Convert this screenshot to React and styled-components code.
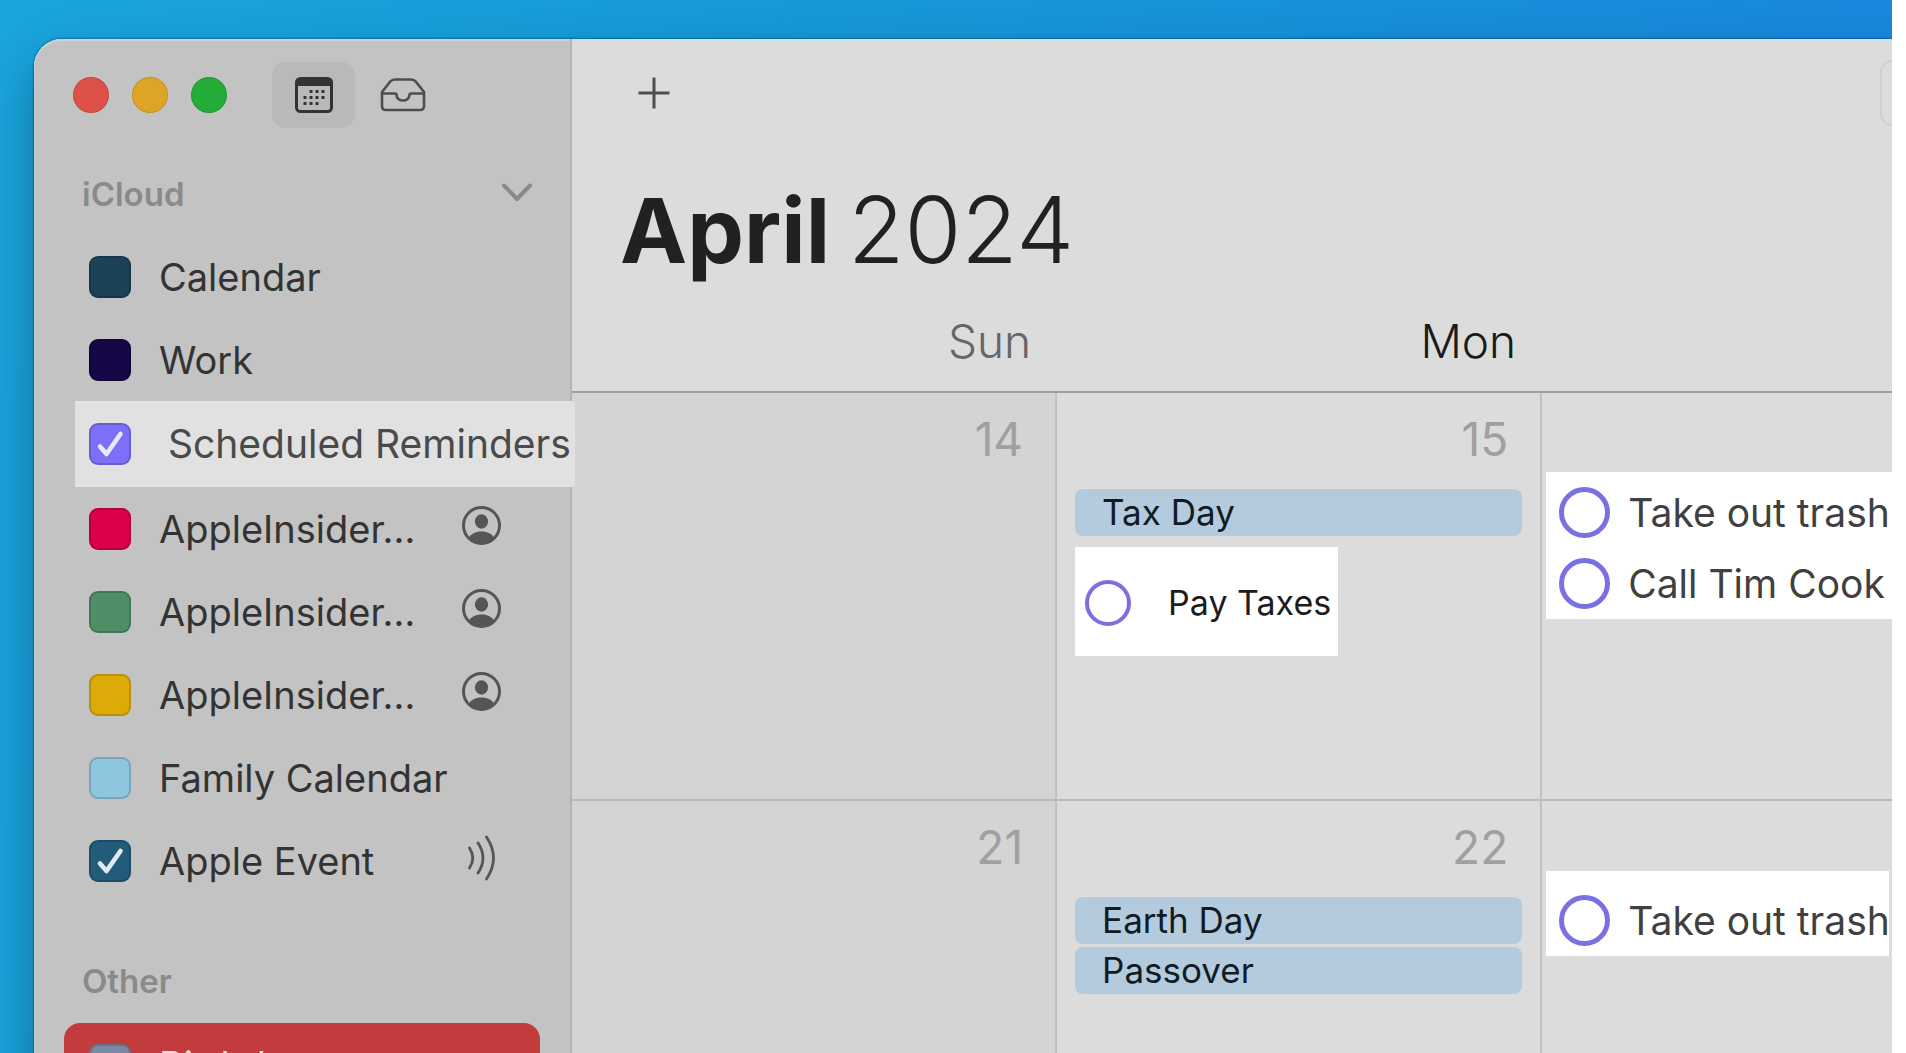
import { useState } from "react";
import styled, { createGlobalStyle } from "styled-components";

const GlobalStyle = createGlobalStyle`
  *,
  *::before,
  *::after {
    box-sizing: border-box;
  }

  body {
    margin: 0;
    background: #fff;
    font-family: Inter, "Liberation Sans", sans-serif;
    color: #383838;
  }

  button,
  input {
    margin: 0;
    padding: 0;
    border: none;
    background: none;
    font: inherit;
    color: inherit;
  }
`;

const Desktop = styled.div`
  height: 100vh;
  margin-right: 14px;
  padding: 39px 0 0 34px;
  overflow: hidden;
  background: linear-gradient(100deg, #1aa5dd 0%, #169ad8 35%, #1a84dc 100%);
`;

const Window = styled.div`
  display: flex;
  min-height: 100%;
  border-top-left-radius: 28px;
  background: #dcdcdc;
  box-shadow: 0 0 2px 1px rgba(0, 50, 90, 0.4), 0 24px 50px rgba(0, 40, 70, 0.4),
    inset 0 2px 1px #d3dee8;
`;

const Sidebar = styled.aside`
  flex: none;
  width: 538px;
  padding-top: 23px;
  border-right: 2px solid #b5b5b5;
  border-top-left-radius: 28px;
  background: #c3c3c3;
  box-shadow: inset 0 2px 1px #cbd3dc;
`;

const SidebarToolbar = styled.div`
  display: flex;
  align-items: center;
  height: 66px;
  padding-left: 39px;
`;

const WindowButtons = styled.div`
  display: flex;
  gap: 23px;
  margin-right: 45px;
`;

const WindowButton = styled.button`
  width: 36px;
  height: 36px;
  border: 1px solid rgba(0, 0, 0, 0.12);
  border-radius: 50%;
  background: ${(p) => p.$color};
`;

const IconButton = styled.button`
  display: flex;
  align-items: center;
  justify-content: center;
  width: ${(p) => p.$width}px;
  height: 66px;
  border-radius: 14px;
  background: ${(p) => (p.$active ? "#b9b9b9" : "transparent")};
  color: ${(p) => (p.$active ? "#333" : "#4d4d4d")};
`;

const SectionHeader = styled.div`
  display: flex;
  align-items: center;
  justify-content: space-between;
  height: 40px;
  margin: ${(p) => (p.$first ? "46px 37px 21px 48px" : "59px 37px 22px 48px")};
  color: #8a8a8a;
`;

const SectionTitle = styled.h2`
  margin: 0;
  font-size: 33px;
  line-height: 40px;
  font-weight: 600;
`;

const CalendarList = styled.ul`
  margin: 0;
  padding: 0;
  list-style: none;
`;

const CalendarItem = styled.li`
  display: flex;
  align-items: center;
  height: 83px;
  margin-left: 41px;
  padding-left: 14px;

  ${(p) =>
    p.$highlighted &&
    `
    position: relative;
    z-index: 1;
    height: 86px;
    margin-right: -5px;
    background: #e1e1e1;
  `}
`;

const CalendarLabel = styled.label`
  display: flex;
  align-items: center;
  gap: ${(p) => (p.$wide ? 37 : 28)}px;
  font-size: ${(p) => (p.$wide ? 39 : 38)}px;
  line-height: 48px;
  white-space: nowrap;
  color: ${(p) => p.$color || "#333"};
`;

const CheckboxWrapper = styled.span`
  position: relative;
  display: flex;
`;

const Checkbox = styled.input`
  appearance: none;
  width: 42px;
  height: 42px;
  border: 2px solid rgba(0, 0, 0, 0.16);
  border-radius: 9px;
  background: ${(p) => p.$color};
`;

const CheckMark = styled.svg`
  position: absolute;
  inset: 0;
  pointer-events: none;
`;

const ItemBadge = styled.span`
  display: flex;
  justify-content: center;
  width: 39px;
  margin: 0 69px 6px auto;
  color: #555;
`;

const SelectedCalendar = styled.div`
  height: 83px;
  display: flex;
  align-items: center;
  margin: 0 30px;
  padding-left: 25px;
  border-radius: 16px;
  background: #c23c3d;
`;

const Main = styled.main`
  flex: 1;
  min-width: 0;
  padding-top: 21px;
`;

const MainToolbar = styled.div`
  display: flex;
  align-items: center;
  justify-content: space-between;
  height: 66px;
  padding-left: 51px;
  color: #5c5c5c;
`;

const SearchButton = styled.button`
  width: 12px;
  height: 66px;
  border: 2px solid #d0d0d0;
  border-right: none;
  border-radius: 16px 0 0 16px;
`;

const Month = styled.h1`
  display: flex;
  align-items: baseline;
  gap: 18px;
  margin: 48px 0 0 48px;
  font-size: 90px;
  line-height: 112px;
  font-weight: 700;
  color: #212121;
`;

const Year = styled.span`
  font-size: 92px;
  font-weight: 300;
`;

const MonthTable = styled.table`
  width: 100%;
  table-layout: fixed;
  border-spacing: 0;
`;

const Column = styled.col`
  width: ${(p) => p.$share}%;
`;

const Weekday = styled.th`
  height: 106px;
  padding: 26px 26px 22px 0;
  border-bottom: 2px solid #a0a0a0;
  font-size: 46px;
  line-height: 56px;
  font-weight: 300;
  text-align: right;
  color: ${(p) => (p.$weekend ? "#666" : "#1a1a1a")};
`;

const Day = styled.td`
  height: 408px;
  padding: 0;
  vertical-align: top;
  border-bottom: 2px solid #bababa;
  border-right: ${(p) => (p.$last ? "none" : "2px solid #c0c0c0")};
  background: ${(p) => (p.$weekend ? "#d4d4d4" : "transparent")};
`;

const DayNumber = styled.div`
  padding: 18px 32px 22px 0;
  font-size: 46px;
  line-height: 56px;
  text-align: right;
  color: #a0a0a0;
`;

const Events = styled.div`
  display: flex;
  flex-direction: column;
  gap: 3px;
  margin: 0 18px;
`;

const Event = styled.div`
  height: 47px;
  padding-left: 27px;
  border-radius: 8px;
  background: #b4cbdd;
  font-size: 35px;
  line-height: 46px;
  color: #101b24;
`;

const TaskCard = styled.div`
  display: flex;
  width: fit-content;
  height: 109px;
  margin: 11px 0 0 18px;
  padding: 2px 7px 0 10px;
  background: #fff;
`;

const TaskList = styled.div`
  display: flex;
  flex-direction: column;
  gap: 20px;
  margin: ${(p) => p.$top}px ${(p) => (p.$single ? 3 : 0)}px 0 4px;
  padding: ${(p) => (p.$single ? "24px 0 10px 13px" : "15px 0 10px 13px")};
  background: #fff;
`;

const Task = styled.label`
  display: flex;
  align-items: center;
  gap: ${(p) => (p.$small ? 37 : 18)}px;
  font-size: ${(p) => (p.$small ? 34 : 39)}px;
  line-height: 48px;
  white-space: nowrap;
  color: ${(p) => (p.$small ? "#1c1c1c" : "#404040")};
`;

const TaskCircle = styled.input`
  appearance: none;
  flex: none;
  width: ${(p) => (p.$small ? 46 : 51)}px;
  height: ${(p) => (p.$small ? 46 : 51)}px;
  border: ${(p) => (p.$small ? 4 : 5)}px solid #7b70e2;
  border-radius: 50%;

  &:checked {
    background: #7b70e2;
    box-shadow: inset 0 0 0 5px #fff;
  }
`;

function CalendarIcon() {
  const dots = [
    [16, 14],
    [22, 14],
    [28, 14],
    [10, 20],
    [16, 20],
    [22, 20],
    [28, 20],
    [10, 26],
    [16, 26],
    [22, 26],
  ];

  return (
    <svg width="38" height="36" viewBox="0 0 38 36" fill="none">
      <rect
        x="1.5"
        y="1.5"
        width="35"
        height="33"
        rx="4"
        stroke="currentColor"
        strokeWidth="3"
      />
      <path d="M1 5a4 4 0 0 1 4-4h28a4 4 0 0 1 4 4v4H1z" fill="currentColor" />
      {dots.map(([x, y]) => (
        <rect
          key={`${x}-${y}`}
          x={x - 1.5}
          y={y - 1}
          width="3"
          height="3"
          rx="0.5"
          fill="currentColor"
        />
      ))}
    </svg>
  );
}

function InboxIcon() {
  return (
    <svg
      width="46"
      height="34"
      viewBox="0 0 46 34"
      fill="none"
      stroke="currentColor"
      strokeWidth="2.6"
      strokeLinejoin="round"
    >
      <path d="M2 14 10.5 3.2Q12.6 1.5 15.5 1.5h15Q33.4 1.5 35.5 3.2L44 14v14.5a3.5 3.5 0 0 1-3.5 3.5h-35A3.5 3.5 0 0 1 2 28.5z" />
      <path d="M2 15.5h13q1.5 0 1.5 1.5a6.500 5.500 0 0 0 13 0q0-1.5 1.5-1.5h13" />
    </svg>
  );
}

function PersonIcon() {
  return (
    <svg width="39" height="39" viewBox="0 0 39 39" fill="none">
      <circle cx="19.5" cy="19.5" r="18" stroke="currentColor" strokeWidth="3" />
      <ellipse cx="19.5" cy="15.5" rx="6.6" ry="7.2" fill="currentColor" />
      <path
        d="M7 32c1.5-4 6.5-6.500 12.500-6.500S30.500 28 32 32c-3.500 3.500-7.500 5.500-12.500 5.500S10.500 35.500 7 32z"
        fill="currentColor"
      />
    </svg>
  );
}

function BroadcastIcon() {
  return (
    <svg
      width="30"
      height="46"
      viewBox="0 0 30 46"
      fill="none"
      stroke="currentColor"
      strokeWidth="2.8"
      strokeLinecap="round"
    >
      <path d="M2.500 13q6.500 10 0 20" />
      <path d="M11 8q10 15 0 30" />
      <path d="M19.500 2q14 21 0 42" />
    </svg>
  );
}

const badges = { shared: PersonIcon, subscribed: BroadcastIcon };

const calendars = [
  { id: "calendar", name: "Calendar", color: "#1c4257" },
  { id: "work", name: "Work", color: "#160746" },
  {
    id: "reminders",
    name: "Scheduled Reminders",
    color: "#7b70f7",
    highlighted: true,
  },
  { id: "ai-1", name: "AppleInsider…", color: "#db0049", badge: "shared" },
  { id: "ai-2", name: "AppleInsider…", color: "#4f8e67", badge: "shared" },
  { id: "ai-3", name: "AppleInsider…", color: "#dcab08", badge: "shared" },
  { id: "family", name: "Family Calendar", color: "#8ec6df" },
  {
    id: "event",
    name: "Apple Event",
    color: "#235b7b",
    badge: "subscribed",
  },
];

function CalendarToggle({ name, color, wide, textColor, checked, onChange }) {
  return (
    <CalendarLabel $wide={wide} $color={textColor}>
      <CheckboxWrapper>
        <Checkbox
          type="checkbox"
          $color={color}
          checked={checked}
          onChange={onChange}
        />
        {checked && (
          <CheckMark width="42" height="42" viewBox="0 0 42 42" fill="none">
            <path
              d="M11 23.5 17.5 31 31.5 11"
              stroke="#e6eaf8"
              strokeWidth="4.6"
              strokeLinecap="round"
              strokeLinejoin="round"
            />
          </CheckMark>
        )}
      </CheckboxWrapper>
      {name}
    </CalendarLabel>
  );
}

function CalendarSidebar() {
  const [visible, setVisible] = useState(["reminders", "event"]);

  const toggle = (id) =>
    setVisible((ids) =>
      ids.includes(id) ? ids.filter((i) => i !== id) : [...ids, id]
    );

  return (
    <Sidebar>
      <SidebarToolbar>
        <WindowButtons>
          <WindowButton aria-label="Close" $color="#dd5148" />
          <WindowButton aria-label="Minimize" $color="#dea425" />
          <WindowButton aria-label="Zoom" $color="#23ad38" />
        </WindowButtons>
        <IconButton aria-label="Calendars" $width={83} $active>
          <CalendarIcon />
        </IconButton>
        <IconButton aria-label="Inbox" $width={96}>
          <InboxIcon />
        </IconButton>
      </SidebarToolbar>

      <SectionHeader $first>
        <SectionTitle>iCloud</SectionTitle>
        <button aria-label="Collapse iCloud">
          <svg width="32" height="20" viewBox="0 0 32 20" fill="none">
            <path
              d="M3 3.5 16 17 29 3.5"
              stroke="currentColor"
              strokeWidth="4"
              strokeLinecap="round"
              strokeLinejoin="round"
            />
          </svg>
        </button>
      </SectionHeader>
      <CalendarList>
        {calendars.map(({ id, name, color, badge, highlighted }) => {
          const Badge = badges[badge];
          return (
            <CalendarItem key={id} $highlighted={highlighted}>
              <CalendarToggle
                name={name}
                color={color}
                wide={highlighted}
                textColor={highlighted && "#4a4a4a"}
                checked={visible.includes(id)}
                onChange={() => toggle(id)}
              />
              {Badge && (
                <ItemBadge>
                  <Badge />
                </ItemBadge>
              )}
            </CalendarItem>
          );
        })}
      </CalendarList>

      <SectionHeader>
        <SectionTitle>Other</SectionTitle>
      </SectionHeader>
      <SelectedCalendar>
        <CalendarToggle
          name="Birthdays"
          color="#7c87a3"
          textColor="#f3dede"
          checked={visible.includes("birthdays")}
          onChange={() => toggle("birthdays")}
        />
      </SelectedCalendar>
    </Sidebar>
  );
}

function TaskItem({ small, children }) {
  return (
    <Task $small={small}>
      <TaskCircle type="checkbox" $small={small} />
      {children}
    </Task>
  );
}

function MonthGrid() {
  return (
    <MonthTable>
      <colgroup>
        <Column $share={36.75} />
        <Column $share={36.75} />
        <Column $share={26.5} />
      </colgroup>
      <thead>
        <tr>
          <Weekday scope="col" $weekend>
            Sun
          </Weekday>
          <Weekday scope="col">Mon</Weekday>
          <Weekday scope="col" />
        </tr>
      </thead>
      <tbody>
        <tr>
          <Day $weekend>
            <DayNumber>14</DayNumber>
          </Day>
          <Day>
            <DayNumber>15</DayNumber>
            <Events>
              <Event>Tax Day</Event>
            </Events>
            <TaskCard>
              <TaskItem small>Pay Taxes</TaskItem>
            </TaskCard>
          </Day>
          <Day $last>
            <TaskList $top={79}>
              <TaskItem>Take out trash</TaskItem>
              <TaskItem>Call Tim Cook</TaskItem>
            </TaskList>
          </Day>
        </tr>
        <tr>
          <Day $weekend>
            <DayNumber>21</DayNumber>
          </Day>
          <Day>
            <DayNumber>22</DayNumber>
            <Events>
              <Event>Earth Day</Event>
              <Event>Passover</Event>
            </Events>
          </Day>
          <Day $last>
            <TaskList $top={70} $single>
              <TaskItem>Take out trash</TaskItem>
            </TaskList>
          </Day>
        </tr>
      </tbody>
    </MonthTable>
  );
}

function App() {
  return (
    <>
      <GlobalStyle />
      <Desktop>
        <Window>
          <CalendarSidebar />
          <Main>
            <MainToolbar>
              <IconButton aria-label="New event" $width={62}>
                <svg width="32" height="32" viewBox="0 0 32 32" fill="none">
                  <path
                    d="M16 0.5v31M0.5 16h31"
                    stroke="currentColor"
                    strokeWidth="3"
                  />
                </svg>
              </IconButton>
              <SearchButton aria-label="View" />
            </MainToolbar>
            <Month>
              <span>April</span>
              <Year>2024</Year>
            </Month>
            <MonthGrid />
          </Main>
        </Window>
      </Desktop>
    </>
  );
}

export default App;
